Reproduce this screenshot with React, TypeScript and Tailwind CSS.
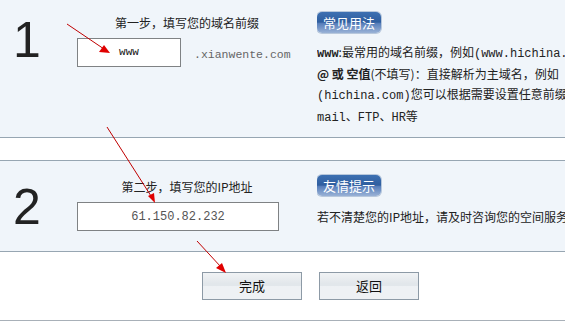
import React from "react";

function Badge({ children }: { children: React.ReactNode }) {
  return (
    <div className="w-[64px] h-[21px] rounded-[5px] text-white text-[13px] leading-[21px] text-center bg-[linear-gradient(#3d70b2,#2f5e9f_48%,#587fbb_55%,#9ab2d6)] shadow-[0_0_0_1px_#b8c8dc]">
      {children}
    </div>
  );
}

function Btn({ children }: { children: React.ReactNode }) {
  return (
    <button className="w-[100px] h-[28px] border border-[#8d9aa6] text-[13px] text-[#111] bg-[linear-gradient(#f1f3f5,#e2e7eb_40%,#e2e7eb_48%,#eef1f4_52%,#eef1f4)]">
      {children}
    </button>
  );
}

export default function App() {
  return (
    <div className="relative w-[565px] h-[323px] overflow-hidden bg-white text-[#333] font-['SimSun','Noto_Sans_CJK_SC','Liberation_Sans',sans-serif]">
      {/* Panel 1 */}
      <div className="h-[138px] bg-[#f0f5fa] border-b border-[#97a6b2] flex">
        <div className="w-[77px] pl-[13px] pt-[15px] text-[50px] leading-[50px] text-[#222] font-['Liberation_Sans',Arial,sans-serif]">
          1
        </div>
        <div className="w-[240px] pt-[16px]">
          <div className="w-[220px] text-center text-[12px] leading-[14px] text-[#222]">第一步，填写您的域名前缀</div>
          <div className="flex items-center mt-[8px]">
            <div className="w-[104px] h-[29px] bg-white border border-[#7f8284] flex items-center justify-center text-[11px] text-[#111] font-['Liberation_Mono',monospace]">
              www
            </div>
            <div className="ml-[13px] mt-[5px] text-[11.5px] text-[#666] font-['Liberation_Mono',monospace]">
              .xianwente.com
            </div>
          </div>
        </div>
        <div className="flex-1 min-w-0 pt-[12px] whitespace-nowrap overflow-hidden text-[12px] text-[#222]">
          <Badge>常见用法</Badge>
          <div className="mt-[9px] leading-[20px]">
            <div>
              <span className="font-bold font-['Liberation_Mono',monospace]">www</span>:最常用的域名前缀，例如
              <span className="font-['Liberation_Mono',monospace]">(www.hichina.com)</span>
            </div>
            <div>
              <span className="font-bold">@ 或 空值</span>(不填写)：直接解析为主域名，例如
            </div>
            <div>
              <span className="font-['Liberation_Mono',monospace]">(hichina.com)</span>您可以根据需要设置任意前缀，如
            </div>
            <div>
              <span className="font-['Liberation_Mono',monospace]">mail</span>、
              <span className="font-['Liberation_Mono',monospace]">FTP</span>、
              <span className="font-['Liberation_Mono',monospace]">HR</span>等
            </div>
          </div>
        </div>
      </div>
      {/* white band */}
      <div className="h-[22px]" />
      {/* Panel 2 */}
      <div className="h-[92px] bg-[#f0f5fa] border-y border-[#97a6b2] flex">
        <div className="w-[77px] pl-[13px] pt-[21px] text-[50px] leading-[50px] text-[#222] font-['Liberation_Sans',Arial,sans-serif]">
          2
        </div>
        <div className="w-[240px] pt-[19px]">
          <div className="w-[220px] text-center text-[12px] leading-[14px] text-[#222]">第二步，填写您的IP地址</div>
          <div className="mt-[8px] w-[202px] h-[29px] bg-white border border-[#7f8284] flex items-center justify-center text-[12px] text-[#555] font-['Liberation_Mono',monospace]">
            61.150.82.232
          </div>
        </div>
        <div className="flex-1 min-w-0 pt-[14px] whitespace-nowrap overflow-hidden text-[12px] text-[#222]">
          <Badge>友情提示</Badge>
          <div className="mt-[14px] leading-[14px]">若不清楚您的IP地址，请及时咨询您的空间服务商</div>
        </div>
      </div>
      {/* buttons */}
      <div className="h-[69px] border-b border-[#a8b0b8] flex justify-center items-start pt-[20px] gap-[17px] pl-[56px]">
        <Btn>完成</Btn>
        <Btn>返回</Btn>
      </div>
      {/* red arrows overlay */}
      <svg className="absolute inset-0 pointer-events-none" width="565" height="323" viewBox="0 0 565 323">
        <g stroke="#c00000" strokeWidth="1" fill="none">
          <line x1="67" y1="24" x2="104" y2="49" />
          <line x1="107" y1="127" x2="151" y2="196" />
          <line x1="197" y1="241" x2="221" y2="267" />
        </g>
        <g fill="#e00000">
          <polygon points="110,53 99,52 104,45" />
          <polygon points="155,203 148,196 154,193" />
          <polygon points="226,273 216,268 222,263" />
        </g>
      </svg>
    </div>
  );
}
